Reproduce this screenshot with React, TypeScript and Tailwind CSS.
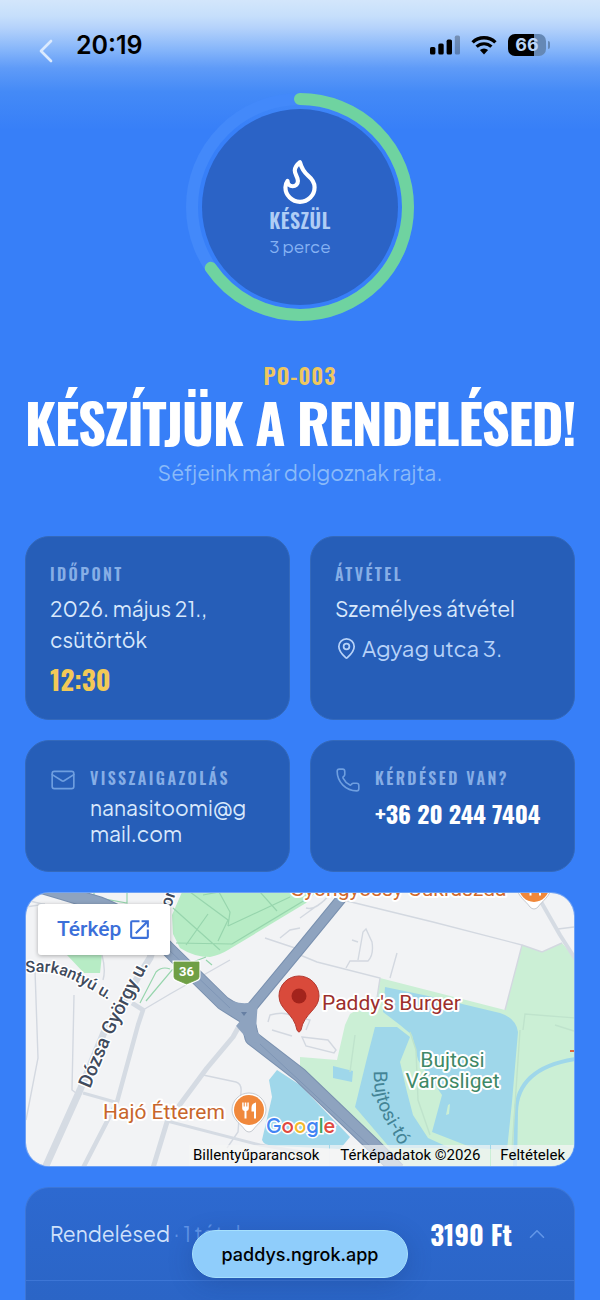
import type { ReactNode } from 'react';
import { ChevronLeft, ChevronUp, Flame, Mail, MapPin, Phone } from 'lucide-react';
import { MdOpenInNew } from 'react-icons/md';

const display = "font-['Oswald','Liberation_Sans_Narrow','Roboto_Condensed',sans-serif]";
const body = "font-['Plus_Jakarta_Sans','Inter',sans-serif]";

function StatusBar() {
  return (
    <header className="flex h-[92px] items-start justify-between pt-[30px] pr-[50px] pl-[26px] font-['Inter',sans-serif] text-black">
      <div className="flex items-start gap-[10px]">
        <button type="button" aria-label="Vissza" className="mt-px text-[#dbeafe]">
          <ChevronLeft size={40} strokeWidth={1.6} />
        </button>
        <time className="text-[25px] leading-[30px] font-semibold">20:19</time>
      </div>
      <div className="flex h-[30px] items-center gap-[11px]">
        <svg width="30" height="20" viewBox="0 0 30 20" aria-hidden="true">
          <rect x="0" y="12" width="5.4" height="7.6" rx="1.6" />
          <rect x="8.3" y="8.5" width="5.4" height="11.1" rx="1.6" />
          <rect x="16.6" y="4.6" width="5.4" height="15" rx="1.6" />
          <rect x="24.8" y="0.6" width="5.2" height="19" rx="1.6" opacity="0.28" />
        </svg>
        <svg width="26" height="19" viewBox="0 0 26 19" fill="none" stroke="#000" aria-hidden="true">
          <path d="M1.6 6.4a16.4 16.4 0 0 1 22.8 0" strokeWidth="3.4" />
          <path d="M5.6 10.7a10.7 10.7 0 0 1 14.8 0" strokeWidth="3.2" />
          <path d="M8.9 14.1a6 6 0 0 1 8.2 0L13 18.6z" fill="#000" stroke="none" />
        </svg>
        <div className="flex items-center gap-[2px]">
          <div className="flex h-[22px] w-[38px] items-center justify-center rounded-[7px] bg-[linear-gradient(90deg,#000_68%,#6588b5_68%)] text-[18px] leading-[22px] font-bold text-[#b9d5fa]">
            66
          </div>
          <span className="h-2 w-[2px] rounded-r bg-[#6588b5]" />
        </div>
      </div>
    </header>
  );
}

function ProgressRing() {
  const circumference = 2 * Math.PI * 108;
  return (
    <div className="relative mx-auto size-[230px]">
      <svg viewBox="0 0 230 230" className="size-full" aria-hidden="true">
        <circle cx="115" cy="115" r="108" fill="none" stroke="#4389fa" strokeWidth="12" />
        <circle cx="115" cy="115" r="98" fill="#2b63c6" />
        <circle
          cx="115"
          cy="115"
          r="108"
          fill="none"
          stroke="#6fd3a0"
          strokeWidth="12"
          strokeLinecap="round"
          strokeDasharray={`${circumference * 0.654} ${circumference}`}
          transform="rotate(-90 115 115)"
        />
      </svg>
      <div className="absolute inset-0 flex flex-col items-center justify-center pt-[2px]">
        <Flame size={50} strokeWidth={2} className="text-white" />
        <p className={`${display} mt-[2px] text-[20px] leading-[24px] font-semibold tracking-wide text-[#afcdf5]`}>KÉSZÜL</p>
        <p className={`${body} text-[17px] leading-[28px] text-[#86b2f3]`}>3 perce</p>
      </div>
    </div>
  );
}

function Label({ children }: { children: ReactNode }) {
  return (
    <h2 className={`${display} text-[16px] leading-[26px] font-semibold tracking-[0.15em] whitespace-nowrap text-[#86aee6]`}>
      {children}
    </h2>
  );
}

function Card({ icon, children }: { icon?: ReactNode; children: ReactNode }) {
  return (
    <section className="flex min-w-0 gap-[14px] rounded-[24px] border border-[#3469bb] bg-[#265eb8] p-6">
      {icon}
      <div className="min-w-0 flex-1">{children}</div>
    </section>
  );
}

function MapDrawing() {
  return (
    <svg
      viewBox="26 892 548 275"
      preserveAspectRatio="xMidYMid slice"
      className="block size-full font-['Roboto',sans-serif]"
      role="img"
      aria-label="Paddy's Burger a térképen"
    >
      <defs>
        <path id="sarkantyu" d="M26 973 Q48 970 64 976 T118 1006" />
        <path id="dozsa" d="M90 1089 L113 1034 L162 938" />
        <path id="bujtosi-to" d="M374 1071 Q373 1100 386 1122 T410 1165" />
      </defs>
      <rect x="26" y="892" width="548" height="275" fill="#f2f3f5" />

      <g fill="#b7ecc5">
        <path d="M182 892 L172 915 L173 934 L180 948 Q194 957 210 957 Q220 955 228 950 L306 903 L316 892Z" />
        <path d="M67 955 H102 L100 973 L84 973Z" />
      </g>
      <path
        d="M380 978 L505 1010 L522 945 L542 952 L562 943 L575 958 V1168 H395 L300 1075 V1057 L337 1060 L345 1025 L350 1014 L377 998Z"
        fill="#cbefd5"
      />
      <g fill="none" stroke="#97d5ad" strokeWidth="1.2">
        <path d="M173 908 L220 950 M186 945 L208 914 M190 892 L228 920 L218 941 M203 895 L219 892 L230 912 L228 926 M260 892 L277 911 M228 926 L290 897 M176 943 L232 944 L310 897" />
        <path d="M140 1003 L156 972 Q162 966 170 969 M146 1001 L172 970 L206 957 M94 892 V897 L127 903 V892 M206 960 L212 965" />
      </g>

      <g fill="#9fd7ea">
        <path d="M385 987 L433 997 L500 1013 Q516 1018 518 1032 L512 1102 L507 1150 L473 1148 L432 1132 L442 1095 L418 1060 L412 1035 L400 1025 L383 1012Z" />
        <path d="M375 1027 L397 1027 L410 1037 L400 1062 L407 1092 L413 1115 L428 1138 L450 1148 H390 L355 1107 L367 1058Z" />
        <path d="M333 1066 L353 1071 L352 1082 L333 1078Z" />
        <path d="M277 1070 L269 1080 L272 1097 L262 1140 Q264 1146 276 1146 L340 1149 L350 1137 L300 1085Z" />
      </g>
      <path d="M448 1105 l2 -1 -1 10 -3 1Z" fill="#cbefd5" />
      <path d="M575 1059 Q517 1068 516 1112 L515 1167" fill="none" stroke="#9fd7ea" strokeWidth="4" />

      <g fill="none" stroke="#d3d8e0" strokeWidth="1.4">
        <path d="M35 970 L38 1058 L26 1120 M74 995 L72 1090 L76 1093 M102 955 Q106 970 103 980 M26 907 L45 904" />
        <path d="M343 900 L433 922 L522 945 L505 1010 M522 945 L542 952 L562 943 M300 955 L317 962 L380 978 L377 998 M397 953 L390 978" />
        <path d="M352 940 L358 942 M358 960 L363 932 L366 929 L372 942 Q374 955 368 961 H350 L346 968 M558 929 L574 927 M300 918 L325 900 M306 908 Q316 911 330 894" />
        <path d="M268 1022 L270 1015 Q284 1011 292 1016 L310 1020 L306 1030 M272 1030 L292 1036 M302 1037 L328 1040 L336 1050 L334 1053 L306 1046Z" />
        <path d="M203 1075 L236 1082 Q242 1084 241 1092 L238 1132 L227 1148 M26 900 L50 906 M265 938 L295 948 M280 938 L290 930 L300 928 M143 1010 L170 994 L230 960" />
        <path d="M410 1032 L416 1050 L418 1100 L430 1135 M520 1030 L512 1150 M555 1025 L574 1031 M523 1030 L525 1014 L575 1018 M355 1035 L350 1072" stroke="#bfe3cc" />
      </g>
      <g fill="none" stroke="#d5dbe3" strokeLinejoin="round">
        <path d="M45 1168 L80 1090 L105 1030 L150 958 L172 888" strokeWidth="7" />
        <path d="M83 1168 L117 1102 L138 1025 L143 1010 L132 1003" strokeWidth="4.5" />
        <path d="M153 1168 L167 1122 L207 1068 L233 1037 L238 1028" strokeWidth="5" />
        <path d="M167 1121 L260 1145 L320 1155 M83 1093 L115 1102" strokeWidth="3" />
        <path d="M540 900 L560 935 L576 960" strokeWidth="4" />
      </g>

      <g fill="none" strokeLinejoin="round">
        <path d="M40 886 L57 891 L100 904 Q140 920 167 948 L223 1003 L247 1018 L252 1038 L300 1075 L374 1146 L398 1170" stroke="#7990af" strokeWidth="15" />
        <path d="M252 1030 L247 1013 L300 949 L345 894" stroke="#7990af" strokeWidth="11" />
        <path d="M40 886 L57 891 L100 904 Q140 920 167 948 L223 1003 L247 1018 L252 1038 L300 1075 L374 1146 L398 1170" stroke="#8ea3bf" strokeWidth="13" />
        <path d="M252 1030 L247 1013 L300 949 L345 894" stroke="#8ea3bf" strokeWidth="9" />
        <path d="M170 951 L230 1008 M260 1044 L385 1160" stroke="#7f96b6" strokeWidth="1" />
      </g>
      <path d="M233 1001 Q246 1006 258 1000 L256 1030 L266 1044 L250 1042 L236 1026 L241 1020Z" fill="#8ea3bf" />
      <path d="M241 1012 h6 l-3 4z" fill="#667fa3" />

      {/* route shield */}
      <path d="M174 962 H199 V977 Q199 979 196 980 L186.5 984 L177 980 Q174 979 174 977Z" fill="#6f9f45" stroke="#fff" strokeWidth="3" />
      <path d="M174 962 H199 V977 Q199 979 196 980 L186.5 984 L177 980 Q174 979 174 977Z" fill="#6f9f45" stroke="#6f9f45" strokeWidth="0.8" />
      <text x="186.5" y="976" fontSize="13" fontWeight="700" fill="#fff" textAnchor="middle">36</text>

      <g fill="#404a5c" stroke="#fff" strokeWidth="3" strokeLinejoin="round" fontWeight="500" paintOrder="stroke">
        <text fontSize="16"><textPath href="#sarkantyu">Sarkantyú u.</textPath></text>
        <text fontSize="19"><textPath href="#dozsa">Dózsa György u.</textPath></text>
        <text fontSize="17" transform="translate(171 908) rotate(-72)">or</text>
      </g>
      <g stroke="#fff" strokeWidth="4" strokeLinejoin="round" paintOrder="stroke">
        <text x="290" y="896" fill="#d0692c" fontSize="21">Gyöngyössy Cukrászda</text>
        <text x="103" y="1119" fill="#c8662c" fontSize="21">Hajó Étterem</text>
        <text x="322" y="1010" fill="#9c2f2c" fontSize="21">Paddy's Burger</text>
        <g fill="#3f8967" textAnchor="middle" fontSize="21">
          <text x="452.5" y="1067">Bujtosi</text>
          <text x="452.5" y="1088">Városliget</text>
        </g>
      </g>
      <text fontSize="19" fill="#438496"><textPath href="#bujtosi-to">Bujtosi-tó</textPath></text>
      <path d="M570 1051 h5" stroke="#e06a40" strokeWidth="2" />

      {/* restaurant pins */}
      <g id="restaurant-pin">
        <path d="M249 1093 a17 17 0 0 1 17 17 c0 9 -9 14 -13 20 q-4 4 -8 0 c-4 -6 -13 -11 -13 -20 a17 17 0 0 1 17 -17Z" fill="#fff" stroke="#b8bcc4" strokeWidth="0.8" />
        <circle cx="249" cy="1110" r="15" fill="#f0883b" />
        <path d="M242.2 1102.5 h1.5 v4 h1 v-4 h1.6 v4 h1 v-4 h1.5 v6 q0 2 -2.300 2.500 v7.500 h-2 v-7.500 q-2.300 -.5 -2.300 -2.500Z M256 1102.500 v16 h-2 v-7 h-2.500 v-4 q0 -4 4.500 -5Z" fill="#fff" />
      </g>
      <use href="#restaurant-pin" x="285" y="-223" />

      <path d="M299 976 a20 20 0 0 1 20 20 c0 14 -15 17 -18 34 q-2 4 -4 0 c-3 -17 -18 -20 -18 -34 a20 20 0 0 1 20 -20Z" fill="#d94a3b" stroke="#b33a30" strokeWidth="1" />
      <circle cx="299" cy="996" r="7.5" fill="#a3231c" />

      <text x="266" y="1133" fontSize="19" fontWeight="600" stroke="#fff" strokeWidth="3" paintOrder="stroke" className="font-['Product_Sans','Plus_Jakarta_Sans',sans-serif]">
        <tspan fill="#4285f4">G</tspan>
        <tspan fill="#e04a3f">o</tspan>
        <tspan fill="#f2b92c">o</tspan>
        <tspan fill="#4285f4">g</tspan>
        <tspan fill="#3fa65a">l</tspan>
        <tspan fill="#e04a3f">e</tspan>
      </text>
    </svg>
  );
}

function MapCard() {
  return (
    <section className="relative h-[275px] overflow-hidden rounded-[24px] border border-[#6fa2f5] font-['Roboto',sans-serif]">
      <MapDrawing />
      <a
        href="#terkep"
        className="absolute top-[11px] left-3 flex h-[51px] items-center gap-[6px] rounded-[3px] bg-white pr-[18px] pl-[19px] text-[21px] font-medium text-[#3b6fd9] shadow-[0_1px_4px_rgba(0,0,0,0.3)]"
      >
        Térkép
        <MdOpenInNew size={25} />
      </a>
      <div className="absolute right-0 bottom-0 flex h-[21px] text-[15px] leading-[21px] whitespace-nowrap text-black">
        <button type="button" className="bg-[#f5f5f5]/70 pr-[10px] pl-1">Billentyűparancsok</button>
        <span className="ml-px bg-[#f5f5f5]/70 px-[10px]">Térképadatok ©2026</span>
        <a href="#feltetelek" className="ml-px bg-[#f5f5f5]/70 px-[9px]">Feltételek</a>
      </div>
    </section>
  );
}

export default function App() {
  return (
    <div
      className={`${body} relative flex min-h-screen flex-col overflow-hidden bg-[#377ff8] bg-[linear-gradient(180deg,#d3e6fb_0px,#c6dffb_16px,#b4d2fb_28px,#85b5fa_50px,#5f9bf8_68px,#448af7_92px,#377ff8_130px)]`}
    >
      <StatusBar />
      <main className="flex flex-1 flex-col px-[25px]">
        <ProgressRing />
        <div className="mt-[39px] text-center">
          <p className={`${display} text-[22px] leading-[28px] font-semibold tracking-[1px] text-[#eec75f]`}>PO-003</p>
          <h1 className={`${display} -mx-2 mt-1 text-[55px] leading-[56px] font-bold tracking-tight text-white`}>KÉSZÍTJÜK A RENDELÉSED!</h1>
          <p className="mt-2 text-[21px] leading-[32px] text-[#8abaf9]">Séfjeink már dolgoznak rajta.</p>
        </div>

        <div className="mt-[47px] grid grid-cols-2 gap-5">
          <Card>
            <Label>IDŐPONT</Label>
            <p className="mt-[6px] text-[21px] leading-[31px] text-[#d8e8fc]">2026. május 21., csütörtök</p>
            <p className={`${display} mt-2 text-[27px] leading-[32px] font-bold text-[#f2c957]`}>12:30</p>
          </Card>
          <Card>
            <Label>ÁTVÉTEL</Label>
            <p className="mt-[6px] text-[21px] leading-[31px] whitespace-nowrap text-[#d8e8fc]">Személyes átvétel</p>
            <p className="mt-2 flex items-center gap-1 text-[22px] leading-[32px] text-[#b7d2f8]">
              <MapPin size={23} strokeWidth={1.8} />
              Agyag utca 3.
            </p>
          </Card>
          <Card icon={<Mail size={26} strokeWidth={1.5} className="mt-[2px] shrink-0 text-[#6f9fe0]" />}>
            <Label>VISSZAIGAZOLÁS</Label>
            <p className="mt-1 text-[21px] leading-[26px] break-all text-[#d8e8fc]">nanasitoomi@gmail.com</p>
          </Card>
          <Card icon={<Phone size={26} strokeWidth={1.5} className="mt-[2px] shrink-0 text-[#6f9fe0]" />}>
            <Label>KÉRDÉSED VAN?</Label>
            <a href="tel:+36202447404" className={`${display} mt-[6px] block text-[24px] leading-[32px] font-bold whitespace-nowrap text-white`}>
              +36 20 244 7404
            </a>
          </Card>
        </div>

        <div className="mt-5">
          <MapCard />
        </div>

        <section className="mt-5 flex-1 rounded-t-[24px] border border-b-0 border-[#3d76d6] bg-[linear-gradient(180deg,#2d69d0,#2b65c6)]">
          <button type="button" aria-expanded="true" className="flex h-[93px] w-full items-center border-b border-[#3d76d6] px-6 text-left">
            <span className="flex-1 text-[21px] text-[#cfe1fb]">
              Rendelésed <span className="text-[#5f93e6]">· 1 tétel</span>
            </span>
            <span className={`${display} text-[27px] font-bold text-white`}>3190 Ft</span>
            <ChevronUp size={26} strokeWidth={1.5} className="ml-3 text-[#6296e8]" />
          </button>
        </section>
      </main>
      <a
        href="https://paddys.ngrok.app"
        className="absolute bottom-[22px] left-1/2 flex h-12 w-[216px] -translate-x-1/2 items-center justify-center rounded-full border border-[#a6e0fd] bg-[#8fcdfb] font-['Inter',sans-serif] text-[18px] font-medium text-black shadow-[0_6px_24px_rgba(20,50,110,0.25)]"
      >
        paddys.ngrok.app
      </a>
    </div>
  );
}
